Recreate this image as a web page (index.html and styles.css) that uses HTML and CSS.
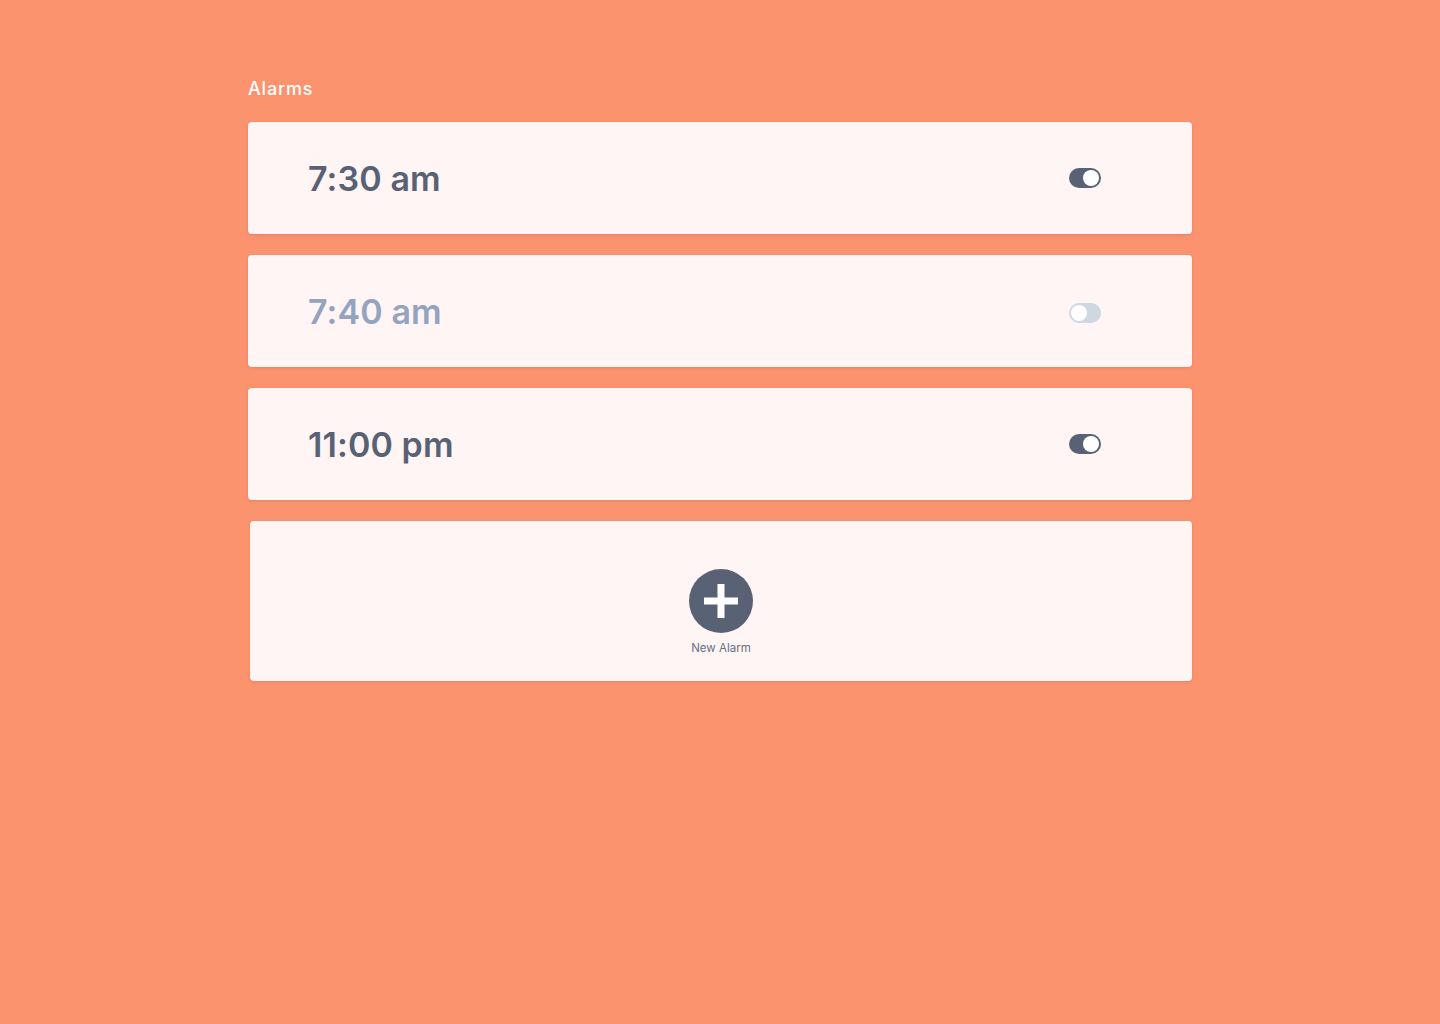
FILE: index.html
```
<!DOCTYPE html>
<html>
<head>
<meta charset="utf-8">
<link rel="stylesheet" href="styles.css">
</head>
<body>
<main class="page">
  <h1 class="title">Alarms</h1>
  <div class="list">
    <div class="card alarm">
      <span class="time">7:30 am</span>
      <span class="toggle on"><span class="knob"></span></span>
    </div>
    <div class="card alarm">
      <span class="time off">7:40 am</span>
      <span class="toggle off"><span class="knob"></span></span>
    </div>
    <div class="card alarm">
      <span class="time">11:00 pm</span>
      <span class="toggle on"><span class="knob"></span></span>
    </div>
    <div class="card new">
      <button class="add">
        <svg width="64" height="64" viewBox="0 0 64 64"><circle cx="32" cy="32" r="32" fill="#596275"/><rect x="28.5" y="15" width="7" height="34" fill="#fff"/><rect x="15" y="28.5" width="34" height="7" fill="#fff"/></svg>
      </button>
      <span class="label">New Alarm</span>
    </div>
  </div>
</main>
</body>
</html>
```
FILE: styles.css
```
html, body { margin: 0; padding: 0; }
body {
  background: #fc936f;
  font-family: "Inter", "DejaVu Sans", sans-serif;
  min-height: 1024px;
}
.page {
  width: 944px;
  margin-left: 248px;
  padding-top: 76px;
}
.title {
  margin: 0 0 21px 0;
  font-size: 18px;
  line-height: 25px;
  font-weight: 500;
  color: #fff;
  letter-spacing: 0.8px;
}
.list {
  display: flex;
  flex-direction: column;
  gap: 21px;
}
.card {
  background: #fff5f5;
  border-radius: 4px;
  box-shadow: 0 1px 3px rgba(120, 50, 20, 0.18);
}
.alarm {
  height: 112px;
  display: flex;
  align-items: center;
  justify-content: space-between;
  padding: 0 91px 0 60px;
  box-sizing: border-box;
}
.time {
  font-size: 34px;
  font-weight: 600;
  color: #596275;
  letter-spacing: 0.1px;
}
.time.off { color: #94a3bf; }
.toggle {
  width: 32px;
  height: 20px;
  border-radius: 10px;
  background: #cfd7e1;
  display: flex;
  align-items: center;
  padding: 0 2px;
  box-sizing: border-box;
  justify-content: flex-start;
}
.toggle.off { margin-top: 4px; }
.toggle.on { background: #596275; justify-content: flex-end; }
.knob {
  width: 16px;
  height: 16px;
  border-radius: 50%;
  background: #fff;
}
.new {
  height: 160px;
  margin-left: 2px;
  display: flex;
  flex-direction: column;
  align-items: center;
  padding-top: 48px;
  box-sizing: border-box;
}
.add {
  border: 0;
  padding: 0;
  background: none;
  width: 64px;
  height: 64px;
  display: block;
}
.add svg { display: block; }
.label {
  margin-top: 8px;
  font-size: 11.5px;
  color: #667085;
}
```
